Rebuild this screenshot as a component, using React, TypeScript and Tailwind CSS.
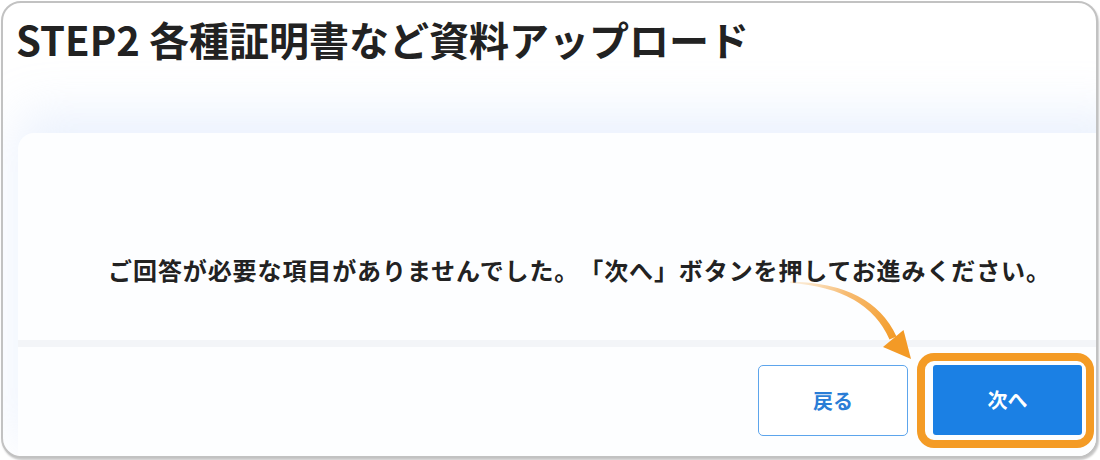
const jp = "font-['Noto_Sans_CJK_JP','Noto_Sans',sans-serif]";

const Arrow = () => (
  <svg
    className="pointer-events-none absolute left-0 top-0"
    width="1100"
    height="460"
    viewBox="0 0 1100 460"
  >
    <defs>
      <linearGradient id="arrowFade" gradientUnits="userSpaceOnUse" x1="790" y1="282" x2="895" y2="340">
        <stop offset="0" stopColor="#f8c98a" stopOpacity="0.25" />
        <stop offset="0.45" stopColor="#f6b05a" stopOpacity="0.85" />
        <stop offset="1" stopColor="#f39a26" />
      </linearGradient>
    </defs>
    <path d="M790 281.5 Q872 283 896.5 336.5 L889.5 339.5 Q867 288 790 283 Z" fill="url(#arrowFade)" />
    <path d="M883 347 L903.5 330 L911 359 Z" fill="#f39a26" />
  </svg>
);

export default function App() {
  return (
    <div className={`relative h-[460px] w-[1100px] bg-white p-[1px] ${jp}`}>
      <div className="h-[457px] w-[1097px] overflow-hidden rounded-[20px] border-2 border-[#c2c2c2] bg-white shadow-[1px_2px_2px_rgba(0,0,0,0.22)]">
        <h1 className="pl-[13px] pt-[12px] text-[40px] font-bold leading-[48px] text-[#222]">
          STEP2 各種証明書など資料アップロード
        </h1>

        <div className="ml-[15px] mt-[70px] w-[1115px] rounded-[16px] bg-[#fdfeff] shadow-[0_-20px_50px_rgba(185,210,248,0.3)]">
          <div className="h-[207px] pl-[8px] pt-[119px] text-center text-[24px] font-bold leading-[36px] tracking-[0.9px] text-[#222] [text-spacing-trim:space-all]">
            ご回答が必要な項目がありませんでした。「次へ」ボタンを押してお進みください。
          </div>
          <div className="h-[7px] bg-[#f3f5f8]" />
          <div className="flex h-[120px] items-start justify-end gap-[25px] pr-[51px] pt-[18px]">
            <button className="h-[71px] w-[150px] rounded-[5px] border-[1.5px] border-[#5da5ec] bg-white text-[20px] font-bold text-[#2a7dd6]">
              戻る
            </button>
            <div className="relative">
              <span className="absolute -bottom-[13px] -left-[16px] -right-[12px] -top-[12px] rounded-[17px] border-[8px] border-[#f49b25]" />
              <button className="relative block h-[70px] w-[149px] rounded-[3px] bg-[#1b80e4] text-[20px] font-bold text-white">
                次へ
              </button>
            </div>
          </div>
        </div>
      </div>
      <Arrow />
    </div>
  );
}
